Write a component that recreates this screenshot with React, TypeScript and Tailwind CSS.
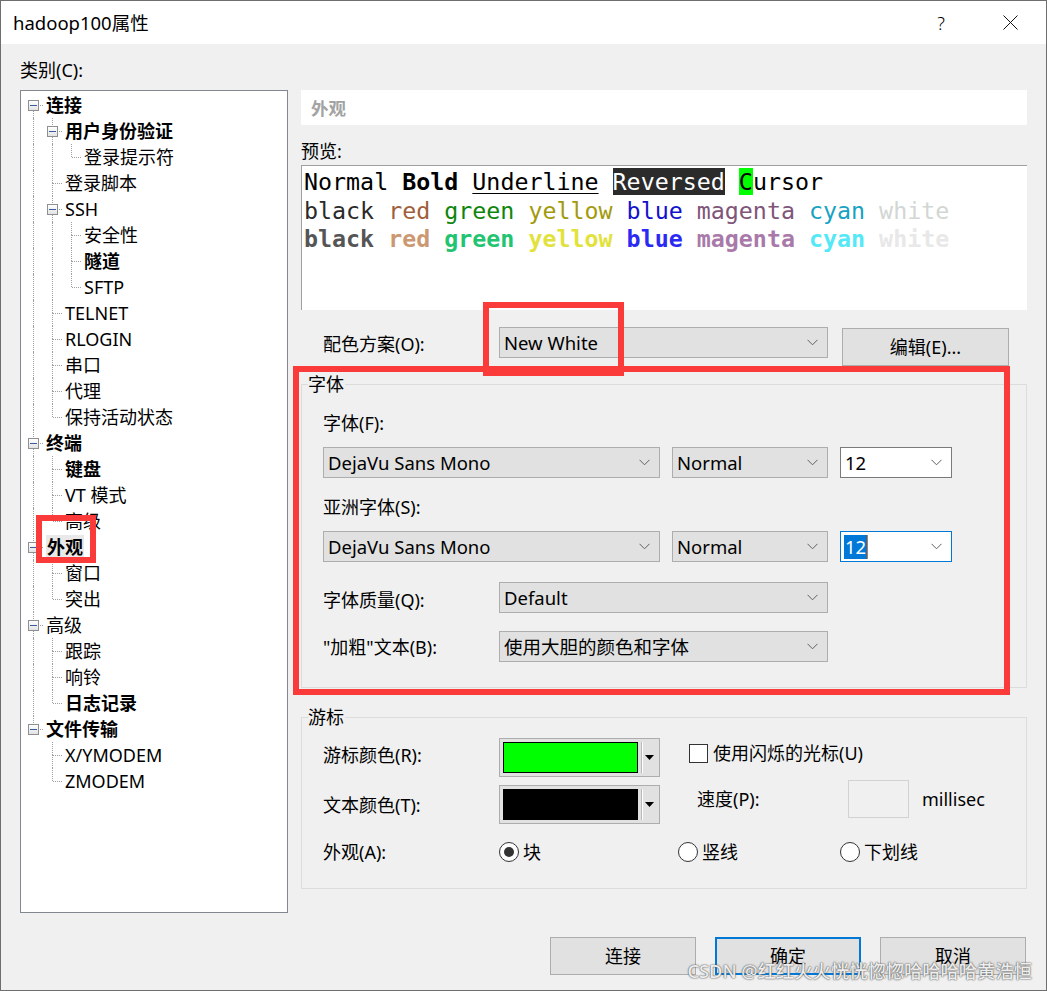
import React from "react";

type Node = [number, string, boolean, boolean];

const tree: Node[] = [
  [0, "连接", true, true],
  [1, "用户身份验证", true, true],
  [2, "登录提示符", false, false],
  [1, "登录脚本", false, false],
  [1, "SSH", false, true],
  [2, "安全性", false, false],
  [2, "隧道", true, false],
  [2, "SFTP", false, false],
  [1, "TELNET", false, false],
  [1, "RLOGIN", false, false],
  [1, "串口", false, false],
  [1, "代理", false, false],
  [1, "保持活动状态", false, false],
  [0, "终端", true, true],
  [1, "键盘", true, false],
  [1, "VT 模式", false, false],
  [1, "高级", false, false],
  [0, "外观", true, true],
  [1, "窗口", false, false],
  [1, "突出", false, false],
  [0, "高级", false, true],
  [1, "跟踪", false, false],
  [1, "响铃", false, false],
  [1, "日志记录", true, false],
  [0, "文件传输", true, true],
  [1, "X/YMODEM", false, false],
  [1, "ZMODEM", false, false],
];

function hasNext(i: number): boolean {
  const d = tree[i][0];
  for (let j = i + 1; j < tree.length; j++) {
    if (tree[j][0] < d) return false;
    if (tree[j][0] === d) return true;
  }
  return false;
}

function ancestorCont(i: number, k: number): boolean {
  for (let j = i - 1; j >= 0; j--) {
    if (tree[j][0] === k) return hasNext(j);
  }
  return false;
}

function TreeRow({ i }: { i: number }) {
  const [depth, label, bold, kids] = tree[i];
  const selected = i === 17;
  const next = hasNext(i);
  const firstRoot = i === 0;
  return (
    <div className="flex h-[26px] items-center">
      {Array.from({ length: depth }).map((_, k) => (
        <div key={k} className="relative h-full w-[19px] shrink-0">
          {ancestorCont(i, k) && (
            <div className="absolute left-[9px] top-0 bottom-0 border-l border-dotted border-[#a0a0a0]" />
          )}
        </div>
      ))}
      <div className="relative h-full w-[19px] shrink-0">
        {!firstRoot && (
          <div className="absolute left-[9px] top-0 h-[13px] border-l border-dotted border-[#a0a0a0]" />
        )}
        {next && (
          <div className="absolute left-[9px] top-[13px] bottom-0 border-l border-dotted border-[#a0a0a0]" />
        )}
        <div className="absolute left-[10px] right-0 top-[13px] border-t border-dotted border-[#a0a0a0]" />
        {kids && (
          <div className="absolute left-[4px] top-[8px] flex h-[11px] w-[11px] items-center justify-center border border-[#8e8f8f] bg-gradient-to-b from-white to-[#e3e3e3]">
            <div className="h-[1px] w-[7px] bg-[#3b5aa0]" />
          </div>
        )}
      </div>
      <span
        className={
          "ml-[3px] whitespace-nowrap text-[18px] leading-[24px] " +
          (bold ? "font-bold " : "") +
          (selected ? "bg-[#e9e9e9] px-[1px] -ml-[1px]" : "")
        }
      >
        {label}
      </span>
    </div>
  );
}

const Chevron = () => (
  <svg width="11" height="7" viewBox="0 0 11 7" className="shrink-0">
    <polyline points="0.5,0.8 5.5,5.8 10.5,0.8" fill="none" stroke="#606060" strokeWidth="1" />
  </svg>
);

function Dropdown({ className, text }: { className: string; text: string }) {
  return (
    <div
      className={
        "flex h-[31px] shrink-0 items-center justify-between border border-[#adadad] bg-[#e1e1e1] pl-[4px] pr-[9px] " +
        className
      }
    >
      <span className="whitespace-nowrap text-[18.5px] leading-[24px]">{text}</span>
      <Chevron />
    </div>
  );
}

function SizeCombo({ focused }: { focused?: boolean }) {
  return (
    <div
      className={
        "flex h-[31px] w-[112px] shrink-0 items-center justify-between bg-white pl-[3px] pr-[9px] " +
        (focused ? "border border-[#0078d7]" : "border border-[#7a7a7a]")
      }
    >
      {focused ? (
        <span className="flex h-[24px] items-center">
          <span className="bg-[#0078d7] px-[1px] text-[18.5px] leading-[24px] text-white">12</span>
          <span className="h-[24px] w-[1px] bg-[#e07020]" />
        </span>
      ) : (
        <span className="px-[1px] text-[18.5px] leading-[24px]">12</span>
      )}
      <Chevron />
    </div>
  );
}

function ColorButton({ color }: { color: string }) {
  return (
    <div className="flex h-[39px] w-[161px] shrink-0 border border-[#adadad] bg-[#e1e1e1] p-[3px]">
      <div className={"w-[135px] border border-black " + color} />
      <div className="ml-[3px] w-[2px] border-l border-[#b9b9b9] border-r border-r-white" />
      <div className="flex flex-1 items-center justify-center">
        <svg width="9" height="5" viewBox="0 0 9 5">
          <polygon points="0,0 9,0 4.5,5" fill="#000" />
        </svg>
      </div>
    </div>
  );
}

function Radio({ on }: { on?: boolean }) {
  return (
    <div className="flex h-[20px] w-[20px] shrink-0 items-center justify-center rounded-full border border-[#333] bg-white">
      {on && <div className="h-[10px] w-[10px] rounded-full bg-[#333]" />}
    </div>
  );
}

export default function App() {
  const mono = "font-['DejaVu_Sans_Mono',monospace]";
  return (
    <div className="relative flex h-[991px] w-[1047px] flex-col overflow-hidden border border-[#6e6e6e] bg-[#f0f0f0] font-['Noto_Sans','Noto_Sans_CJK_SC',sans-serif] text-black">
      {/* Title bar */}
      <div className="flex h-[43px] shrink-0 items-center bg-white pl-[12px]">
        <span className="text-[18.5px] leading-[24px]">hadoop100属性</span>
        <div className="ml-auto flex items-center">
          <span className="mr-[58px] text-[18px] font-light leading-[24px]">?</span>
          <svg width="15" height="15" viewBox="0 0 15 15" className="mr-[28px]">
            <line x1="0.5" y1="0.5" x2="14.5" y2="14.5" stroke="#111" strokeWidth="1" />
            <line x1="14.5" y1="0.5" x2="0.5" y2="14.5" stroke="#111" strokeWidth="1" />
          </svg>
        </div>
      </div>

      {/* Body */}
      <div className="flex shrink-0 text-[18px]">
        {/* Left column */}
        <div className="ml-[19px] flex w-[268px] shrink-0 flex-col">
          <div className="h-[46px] pt-[14px] leading-[24px]">类别(C):</div>
          <div className="h-[823px] border border-[#828790] bg-white pl-[3px] pt-[1px]">
            {tree.map((_, i) => (
              <TreeRow key={i} i={i} />
            ))}
          </div>
        </div>

        {/* Right column */}
        <div className="ml-[13px] mt-[46px] flex w-[726px] shrink-0 flex-col">
          <div className="flex h-[35px] items-center bg-white pl-[10px]">
            <span className="text-[17.5px] font-bold leading-[22px] text-[#a3a3a3]">外观</span>
          </div>
          <div className="flex h-[40px] items-end pb-[2px] leading-[24px]">预览:</div>
          <div className={"h-[145px] border-l border-t border-[#a0a0a0] bg-white pl-[2px] pt-[2px] text-[23.3px] leading-[28.5px] " + mono}>
            <div className="whitespace-pre">
              <span>Normal </span>
              <span className="font-bold">Bold</span>
              <span> </span>
              <span className="underline decoration-1 underline-offset-[3px]">Underline</span>
              <span> </span>
              <span className="bg-[#2b2b2b] text-white">Reversed</span>
              <span> </span>
              <span className="bg-[#00ff00]">C</span>
              <span>ursor</span>
            </div>
            <div className="whitespace-pre">
              <span className="text-[#2a2a2a]">black </span>
              <span className="text-[#a0603c]">red </span>
              <span className="text-[#0e860e]">green </span>
              <span className="text-[#a29a0c]">yellow </span>
              <span className="text-[#1212cc]">blue </span>
              <span className="text-[#80557a]">magenta </span>
              <span className="text-[#18a2c2]">cyan </span>
              <span className="text-[#d2d6d4]">white</span>
            </div>
            <div className="whitespace-pre font-bold">
              <span className="text-[#555555]">black </span>
              <span className="text-[#cc9872]">red </span>
              <span className="text-[#22c472]">green </span>
              <span className="text-[#e2e23c]">yellow </span>
              <span className="text-[#2a2af2]">blue </span>
              <span className="text-[#a97aa9]">magenta </span>
              <span className="text-[#55e8f6]">cyan </span>
              <span className="text-[#e8e8e8]">white</span>
            </div>
          </div>

          {/* Color scheme row */}
          <div className="mt-[17px] flex items-start pl-[22px]">
            <div className="flex h-[31px] w-[176px] shrink-0 items-center pt-[3px] leading-[24px]">配色方案(O):</div>
            <Dropdown className="w-[329px]" text="New White" />
            <div className="ml-[14px] mt-[1px] flex h-[38px] w-[167px] items-center justify-center border border-[#adadad] bg-[#e1e1e1] leading-[24px]">
              编辑(E)...
            </div>
          </div>

          {/* Font group */}
          <div className="mt-[18px] border border-[#dcdcdc]">
            <div className="-mt-[11px] ml-[6px] w-fit bg-[#f0f0f0] pr-[1px] leading-[20px]">字体</div>
            <div className="flex flex-col pb-[25px] pl-[21px]">
              <div className="mt-[17px] leading-[24px]">字体(F):</div>
              <div className="mt-[12px] flex gap-[12px]">
                <Dropdown className="w-[337px]" text="DejaVu Sans Mono" />
                <Dropdown className="w-[156px]" text="Normal" />
                <SizeCombo />
              </div>
              <div className="mt-[17px] leading-[24px]">亚洲字体(S):</div>
              <div className="mt-[12px] flex gap-[12px]">
                <Dropdown className="w-[337px]" text="DejaVu Sans Mono" />
                <Dropdown className="w-[156px]" text="Normal" />
                <SizeCombo focused />
              </div>
              <div className="mt-[20px] flex items-center">
                <div className="w-[176px] shrink-0 pt-[4px] leading-[24px]">字体质量(Q):</div>
                <Dropdown className="w-[329px]" text="Default" />
              </div>
              <div className="mt-[18px] flex items-center">
                <div className="w-[176px] shrink-0 leading-[24px]">"加粗"文本(B):</div>
                <Dropdown className="w-[329px]" text="使用大胆的颜色和字体" />
              </div>
            </div>
          </div>

          {/* Cursor group */}
          <div className="mt-[29px] border border-[#dcdcdc]">
            <div className="-mt-[11px] ml-[6px] w-fit bg-[#f0f0f0] pr-[1px] leading-[20px]">游标</div>
            <div className="flex flex-col pb-[24px] pl-[21px]">
              <div className="mt-[11px] flex h-[39px] items-center">
                <div className="w-[176px] shrink-0 pb-[6px] leading-[24px]">游标颜色(R):</div>
                <ColorButton color="bg-[#00ff00]" />
                <div className="ml-[29px] -mt-[9px] flex items-center">
                  <div className="h-[19px] w-[19px] border border-[#333] bg-white" />
                  <span className="ml-[5px] leading-[24px]">使用闪烁的光标(U)</span>
                </div>
              </div>
              <div className="mt-[8px] flex h-[39px] items-center">
                <div className="w-[176px] shrink-0 leading-[24px]">文本颜色(T):</div>
                <ColorButton color="bg-black" />
                <div className="-mt-[12px] ml-[37px] flex items-center">
                  <div className="w-[151px] shrink-0 leading-[24px]">速度(P):</div>
                  <div className="h-[38px] w-[61px] border border-[#d2d2d2] bg-[#f0f0f0]" />
                  <span className="ml-[13px] leading-[24px]">millisec</span>
                </div>
              </div>
              <div className="mt-[16px] flex h-[24px] items-center">
                <div className="w-[176px] shrink-0 leading-[24px]">外观(A):</div>
                <div className="flex w-[179px] items-center">
                  <Radio on />
                  <span className="ml-[4px] leading-[24px]">块</span>
                </div>
                <div className="flex w-[162px] items-center">
                  <Radio />
                  <span className="ml-[4px] leading-[24px]">竖线</span>
                </div>
                <div className="flex items-center">
                  <Radio />
                  <span className="ml-[4px] leading-[24px]">下划线</span>
                </div>
              </div>
            </div>
          </div>
        </div>
      </div>

      {/* Buttons */}
      <div className="mt-[24px] flex justify-end gap-[19px] pr-[20px] text-[18px]">
        <div className="flex h-[38px] w-[146px] items-center justify-center border border-[#adadad] bg-[#e1e1e1] leading-[24px]">连接</div>
        <div className="flex h-[38px] w-[146px] items-center justify-center border-2 border-[#0078d7] bg-[#e1e1e1] leading-[24px]">确定</div>
        <div className="flex h-[38px] w-[146px] items-center justify-center border border-[#adadad] bg-[#e1e1e1] leading-[24px]">取消</div>
      </div>

      {/* Annotation overlays */}
      <div className="pointer-events-none absolute left-[482px] top-[301px] h-[74px] w-[141px] border-[6px] border-[#fb3a3a]" />
      <div className="pointer-events-none absolute left-[292px] top-[365px] h-[329px] w-[717px] border-[6px] border-[#fb3a3a]" />
      <div className="pointer-events-none absolute left-[35px] top-[514px] h-[48px] w-[60px] border-[6px] border-[#fb3a3a]" />

      {/* Watermark */}
      <div className="pointer-events-none absolute bottom-[7px] right-[14px] whitespace-nowrap text-[18.3px] font-medium leading-[24px] text-white/90 [text-shadow:0_0_1px_#444,0_0_2px_#666]">
        CSDN @红红火火恍恍惚惚哈哈哈哈黄浩恒
      </div>
    </div>
  );
}
